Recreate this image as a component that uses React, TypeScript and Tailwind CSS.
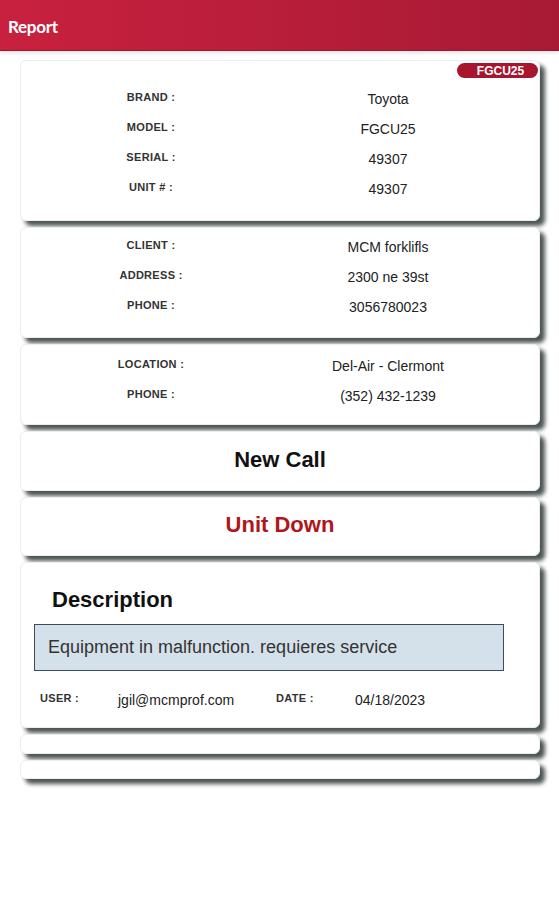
import React from "react";

const font = { fontFamily: '"Liberation Sans", Arial, sans-serif' };

type Row = { label: string; value: string };

function InfoRows({ rows }: { rows: Row[] }) {
  return (
    <div className="flex flex-col">
      {rows.map((r) => (
        <div key={r.label} className="grid grid-cols-[260px_214px] h-[30px] items-center text-center">
          <span className="text-[11px] font-bold text-[#333] tracking-[0.3px] -mt-[3px]">{r.label}</span>
          <span className="text-[14px] text-[#222]">{r.value}</span>
        </div>
      ))}
    </div>
  );
}

const card = "relative bg-white rounded-[6px] border border-[#ececec] shadow-[5px_5px_4px_#4d5655]";

export default function App() {
  return (
    <div className="min-h-[900px] w-[559px] bg-white" style={font}>
      {/* Header */}
      <div className="h-[51px] flex items-center px-[8px] pt-[3px] bg-gradient-to-r from-[#c8213f] to-[#a81a34] border-b border-[#9c1630] shadow-[0_2px_4px_rgba(0,0,0,0.12)]">
        <span className="text-white font-bold text-[17px] tracking-[-0.3px]" style={{ fontFamily: "Lato, sans-serif" }}>
          Report
        </span>
      </div>

      <div className="flex flex-col gap-[6px] pl-[20px] pr-[19px] pt-[9px]">
        {/* Unit */}
        <div className={`${card} pt-[23px] pb-[16px]`}>
          <span className="absolute top-[2px] right-[1px] w-[81px] h-[15px] rounded-full bg-[#a8152f] text-white text-[12px] font-bold flex items-center justify-center leading-none pl-[6px]">
            FGCU25
          </span>
          <InfoRows
            rows={[
              { label: "BRAND :", value: "Toyota" },
              { label: "MODEL :", value: "FGCU25" },
              { label: "SERIAL :", value: "49307" },
              { label: "UNIT # :", value: "49307" },
            ]}
          />
        </div>

        {/* Client */}
        <div className={`${card} pt-[4px] pb-[15px]`}>
          <InfoRows
            rows={[
              { label: "CLIENT :", value: "MCM forklifls" },
              { label: "ADDRESS :", value: "2300 ne 39st" },
              { label: "PHONE :", value: "3056780023" },
            ]}
          />
        </div>

        {/* Location */}
        <div className={`${card} pt-[6px] pb-[13px]`}>
          <InfoRows
            rows={[
              { label: "LOCATION :", value: "Del-Air - Clermont" },
              { label: "PHONE :", value: "(352) 432-1239" },
            ]}
          />
        </div>

        <div className={`${card} h-[60px] flex items-center justify-center`}>
          <span className="text-[22px] font-bold text-[#111] -mt-[3px]">New Call</span>
        </div>

        <div className={`${card} h-[59px] flex items-center justify-center`}>
          <span className="text-[22px] font-bold text-[#b0151c] -mt-[4px]">Unit Down</span>
        </div>

        {/* Description */}
        <div className={`${card} h-[166px] px-[13px] pt-[23px]`}>
          <div className="pl-[18px] text-[22px] font-bold text-[#111] leading-[28px]">Description</div>
          <div className="mt-[10px] w-[470px] h-[47px] bg-[#d4e1ea] border border-[#3f4a5c] flex items-center pl-[13px] text-[18px] text-[#333]">
            Equipment in malfunction. requieres service
          </div>
          <div className="mt-[19px] flex items-center text-[#222]">
            <span className="w-[84px] pl-[6px] text-[11px] font-bold text-[#333] tracking-[0.3px] -mt-[4px]">USER :</span>
            <span className="w-[158px] text-[14px]">jgil@mcmprof.com</span>
            <span className="w-[79px] text-[11px] font-bold text-[#333] tracking-[0.3px] -mt-[4px]">DATE :</span>
            <span className="text-[14px]">04/18/2023</span>
          </div>
        </div>

        <div className={`${card} h-[20px]`} />
        <div className={`${card} h-[19px]`} />
      </div>
    </div>
  );
}
